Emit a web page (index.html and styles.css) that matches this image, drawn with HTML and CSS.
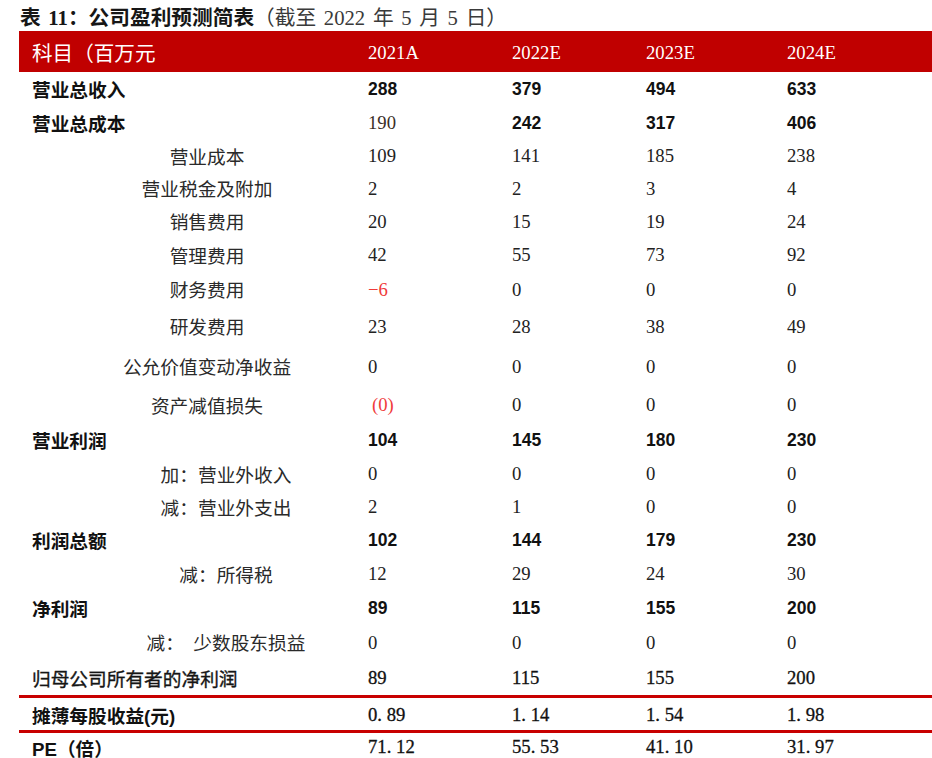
FILE: index.html
```html
<!DOCTYPE html>
<html lang="zh-CN">
<head>
<meta charset="utf-8">
<title>表 11：公司盈利预测简表</title>
<link rel="stylesheet" href="styles.css">
</head>
<body>
<div class="page">
  <div class="title"><span class="title-main">表 11：公司盈利预测简表</span><span class="title-sub">（截至 2022 年 5 月 5 日）</span></div>
  <div class="tbl">
    <div class="row head">
      <div class="lbl">科目（百万元</div>
      <div class="num">2021A</div>
      <div class="num">2022E</div>
      <div class="num">2023E</div>
      <div class="num">2024E</div>
    </div>

    <div class="row strong">
      <div class="lbl">营业总收入</div>
      <div class="num">288</div><div class="num">379</div><div class="num">494</div><div class="num">633</div>
    </div>
    <div class="row strong">
      <div class="lbl">营业总成本</div>
      <div class="num plain">190</div><div class="num">242</div><div class="num">317</div><div class="num">406</div>
    </div>
    <div class="row sub">
      <div class="lbl">营业成本</div>
      <div class="num">109</div><div class="num">141</div><div class="num">185</div><div class="num">238</div>
    </div>
    <div class="row sub">
      <div class="lbl">营业税金及附加</div>
      <div class="num">2</div><div class="num">2</div><div class="num">3</div><div class="num">4</div>
    </div>
    <div class="row sub">
      <div class="lbl">销售费用</div>
      <div class="num">20</div><div class="num">15</div><div class="num">19</div><div class="num">24</div>
    </div>
    <div class="row sub">
      <div class="lbl">管理费用</div>
      <div class="num">42</div><div class="num">55</div><div class="num">73</div><div class="num">92</div>
    </div>
    <div class="row sub">
      <div class="lbl">财务费用</div>
      <div class="num neg">−6</div><div class="num">0</div><div class="num">0</div><div class="num">0</div>
    </div>
    <div class="row sub">
      <div class="lbl">研发费用</div>
      <div class="num">23</div><div class="num">28</div><div class="num">38</div><div class="num">49</div>
    </div>
    <div class="row sub">
      <div class="lbl">公允价值变动净收益</div>
      <div class="num">0</div><div class="num">0</div><div class="num">0</div><div class="num">0</div>
    </div>
    <div class="row sub">
      <div class="lbl">资产减值损失</div>
      <div class="num neg paren">(0)</div><div class="num">0</div><div class="num">0</div><div class="num">0</div>
    </div>
    <div class="row strong">
      <div class="lbl">营业利润</div>
      <div class="num">104</div><div class="num">145</div><div class="num">180</div><div class="num">230</div>
    </div>
    <div class="row sub2">
      <div class="lbl">加：营业外收入</div>
      <div class="num">0</div><div class="num">0</div><div class="num">0</div><div class="num">0</div>
    </div>
    <div class="row sub2">
      <div class="lbl">减：营业外支出</div>
      <div class="num">2</div><div class="num">1</div><div class="num">0</div><div class="num">0</div>
    </div>
    <div class="row strong">
      <div class="lbl">利润总额</div>
      <div class="num">102</div><div class="num">144</div><div class="num">179</div><div class="num">230</div>
    </div>
    <div class="row sub2">
      <div class="lbl">减：所得税</div>
      <div class="num">12</div><div class="num">29</div><div class="num">24</div><div class="num">30</div>
    </div>
    <div class="row strong">
      <div class="lbl">净利润</div>
      <div class="num">89</div><div class="num">115</div><div class="num">155</div><div class="num">200</div>
    </div>
    <div class="row sub2">
      <div class="lbl">减：&ensp;少数股东损益</div>
      <div class="num">0</div><div class="num">0</div><div class="num">0</div><div class="num">0</div>
    </div>
    <div class="row medium">
      <div class="lbl">归母公司所有者的净利润</div>
      <div class="num">89</div><div class="num">115</div><div class="num">155</div><div class="num">200</div>
    </div>

    <div class="rule"></div>

    <div class="row ratio">
      <div class="lbl">摊薄每股收益(元)</div>
      <div class="num">0<span class="dot">.</span>89</div><div class="num">1<span class="dot">.</span>14</div><div class="num">1<span class="dot">.</span>54</div><div class="num">1<span class="dot">.</span>98</div>
    </div>

    <div class="rule"></div>

    <div class="row ratio last">
      <div class="lbl">PE（倍）</div>
      <div class="num">71<span class="dot">.</span>12</div><div class="num">55<span class="dot">.</span>53</div><div class="num">41<span class="dot">.</span>10</div><div class="num">31<span class="dot">.</span>97</div>
    </div>
  </div>
</div>
</body>
</html>
```

FILE: styles.css
```css
html, body {
  margin: 0;
  padding: 0;
  background: #ffffff;
}

body {
  width: 932px;
  height: 758px;
  overflow: hidden;
  font-family: "Noto Sans CJK SC", sans-serif;
  color: #1c1c1c;
}

.page {
  padding-left: 19px;
}

.title {
  height: 31px;
  padding-top: 1px;
  box-sizing: border-box;
  padding-left: 1px;
  line-height: 30px;
  font-size: 20.7px;
  word-spacing: 2.5px;
  white-space: nowrap;
}

.title-main {
  font-family: "Liberation Serif", "Noto Sans CJK SC", serif;
  font-weight: 700;
  color: #161616;
}

.title-sub {
  font-family: "Liberation Serif", "Noto Sans CJK SC", serif;
  font-weight: 400;
  color: #3a3a3a;
}

.tbl {
  display: grid;
  width: 913px;
  grid-template-columns: 349px 144px 134px 141px 1fr;
  grid-template-rows:
    41px 33.5px 33px 33px 32.5px 33px 34px 35px 39.5px 40.5px 36.5px
    34px 33px 33.5px 33.5px 33.5px 34px 35px 36px
    3px 32px 3px 30px;
}

.row {
  display: contents;
}

.row > div {
  display: flex;
  align-items: center;
  white-space: nowrap;
}

.lbl {
  padding-left: 13px;
  font-size: 18.7px;
  font-family: "Noto Sans CJK SC", sans-serif;
}

.num {
  font-family: "Liberation Serif", serif;
  font-size: 18.7px;
  color: #222222;
  padding-top: 2px;
  box-sizing: border-box;
}

/* header bar */
.head > div {
  background: #c00000;
  color: #ffffff;
}

.head .lbl {
  font-size: 20.6px;
}

.head .num {
  color: #ffffff;
  font-size: 18.7px;
}

/* bold total rows */
.strong .lbl {
  font-weight: 700;
  color: #111111;
}

.strong .num {
  font-family: "Liberation Sans", sans-serif;
  font-weight: 700;
  font-size: 17.5px;
  color: #111111;
}

.strong .num.plain {
  font-family: "Liberation Serif", serif;
  font-weight: 400;
  font-size: 18.7px;
  color: #3a2e26;
}

/* indented sub rows */
.sub .lbl {
  justify-content: center;
  padding-left: 27px;
  color: #2a2a2a;
}

.sub2 .lbl {
  justify-content: center;
  padding-left: 65px;
  color: #2a2a2a;
}

.medium .lbl {
  color: #151515;
  -webkit-text-stroke: 0.35px #151515;
}

.medium .num {
  color: #111111;
  -webkit-text-stroke: 0.3px #111111;
}

.num.neg {
  color: #f03a3a;
}

.paren {
  padding-left: 4px;
}

/* ratio rows */
.ratio .lbl {
  font-family: "Liberation Sans", "Noto Sans CJK SC", sans-serif;
  font-weight: 700;
  color: #111111;
}

.ratio .num {
  color: #111111;
  -webkit-text-stroke: 0.3px #111111;
}

.last > div {
  padding-bottom: 2px;
  box-sizing: border-box;
}

.last > .num {
  padding-top: 0;
}

.dot {
  display: inline-block;
  width: 0.5em;
}

.rule {
  grid-column: 1 / -1;
  background: #c80000;
}
```
